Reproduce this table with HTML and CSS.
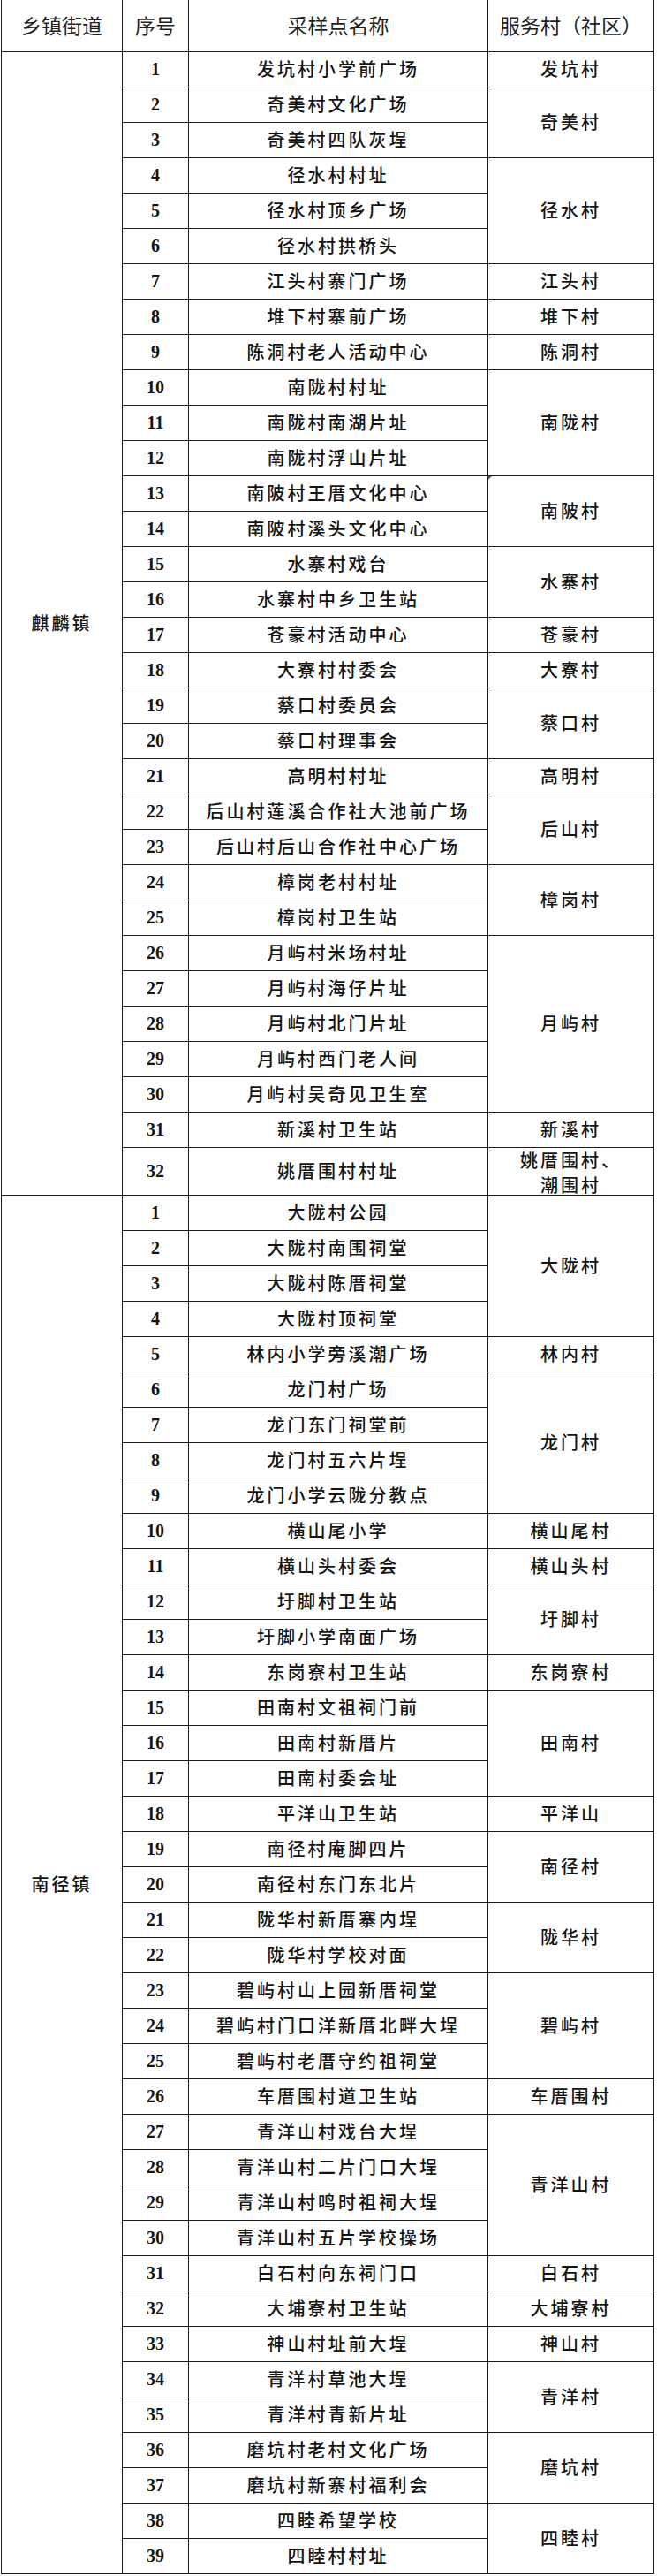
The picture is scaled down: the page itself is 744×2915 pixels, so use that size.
FILE: index.html
```html
<!DOCTYPE html>
<html lang="zh-CN">
<head>
<meta charset="utf-8">
<title>核酸采样点</title>
<link rel="stylesheet" href="styles.css">
</head>
<body>
<table class="sites">
<colgroup>
<col class="c-town"><col class="c-no"><col class="c-name"><col class="c-vil">
</colgroup>
<thead>
<tr class="head">
<th>乡镇街道</th><th>序号</th><th>采样点名称</th><th>服务村（社区）</th>
</tr>
</thead>
<tbody>
<tr><td class="town" rowspan="32">麒麟镇</td><td class="no">1</td><td class="nm">发坑村小学前广场</td><td class="vl">发坑村</td></tr>
<tr><td class="no">2</td><td class="nm">奇美村文化广场</td><td class="vl" rowspan="2">奇美村</td></tr>
<tr><td class="no">3</td><td class="nm">奇美村四队灰埕</td></tr>
<tr><td class="no">4</td><td class="nm">径水村村址</td><td class="vl" rowspan="3">径水村</td></tr>
<tr><td class="no">5</td><td class="nm">径水村顶乡广场</td></tr>
<tr><td class="no">6</td><td class="nm">径水村拱桥头</td></tr>
<tr><td class="no">7</td><td class="nm">江头村寨门广场</td><td class="vl">江头村</td></tr>
<tr><td class="no">8</td><td class="nm">堆下村寨前广场</td><td class="vl">堆下村</td></tr>
<tr><td class="no">9</td><td class="nm">陈洞村老人活动中心</td><td class="vl">陈洞村</td></tr>
<tr><td class="no">10</td><td class="nm">南陇村村址</td><td class="vl" rowspan="3">南陇村</td></tr>
<tr><td class="no">11</td><td class="nm">南陇村南湖片址</td></tr>
<tr><td class="no">12</td><td class="nm">南陇村浮山片址</td></tr>
<tr><td class="no">13</td><td class="nm">南陂村王厝文化中心</td><td class="vl mark" rowspan="2"><span class="flag"></span>南陂村</td></tr>
<tr><td class="no">14</td><td class="nm">南陂村溪头文化中心</td></tr>
<tr><td class="no">15</td><td class="nm">水寨村戏台</td><td class="vl" rowspan="2">水寨村</td></tr>
<tr><td class="no">16</td><td class="nm">水寨村中乡卫生站</td></tr>
<tr><td class="no">17</td><td class="nm">苍豪村活动中心</td><td class="vl">苍豪村</td></tr>
<tr><td class="no">18</td><td class="nm">大寮村村委会</td><td class="vl">大寮村</td></tr>
<tr><td class="no">19</td><td class="nm">蔡口村委员会</td><td class="vl" rowspan="2">蔡口村</td></tr>
<tr><td class="no">20</td><td class="nm">蔡口村理事会</td></tr>
<tr><td class="no">21</td><td class="nm">高明村村址</td><td class="vl">高明村</td></tr>
<tr><td class="no">22</td><td class="nm">后山村莲溪合作社大池前广场</td><td class="vl" rowspan="2">后山村</td></tr>
<tr><td class="no">23</td><td class="nm">后山村后山合作社中心广场</td></tr>
<tr><td class="no">24</td><td class="nm">樟岗老村村址</td><td class="vl" rowspan="2">樟岗村</td></tr>
<tr><td class="no">25</td><td class="nm">樟岗村卫生站</td></tr>
<tr><td class="no">26</td><td class="nm">月屿村米场村址</td><td class="vl" rowspan="5">月屿村</td></tr>
<tr><td class="no">27</td><td class="nm">月屿村海仔片址</td></tr>
<tr><td class="no">28</td><td class="nm">月屿村北门片址</td></tr>
<tr><td class="no">29</td><td class="nm">月屿村西门老人间</td></tr>
<tr><td class="no">30</td><td class="nm">月屿村吴奇见卫生室</td></tr>
<tr><td class="no">31</td><td class="nm">新溪村卫生站</td><td class="vl">新溪村</td></tr>
<tr class="tall"><td class="no">32</td><td class="nm">姚厝围村村址</td><td class="vl two"><span class="lines">姚厝围村、<br>潮围村</span></td></tr>

<tr><td class="town" rowspan="39">南径镇</td><td class="no">1</td><td class="nm">大陇村公园</td><td class="vl" rowspan="4">大陇村</td></tr>
<tr><td class="no">2</td><td class="nm">大陇村南围祠堂</td></tr>
<tr><td class="no">3</td><td class="nm">大陇村陈厝祠堂</td></tr>
<tr><td class="no">4</td><td class="nm">大陇村顶祠堂</td></tr>
<tr><td class="no">5</td><td class="nm">林内小学旁溪潮广场</td><td class="vl">林内村</td></tr>
<tr><td class="no">6</td><td class="nm">龙门村广场</td><td class="vl" rowspan="4">龙门村</td></tr>
<tr><td class="no">7</td><td class="nm">龙门东门祠堂前</td></tr>
<tr><td class="no">8</td><td class="nm">龙门村五六片埕</td></tr>
<tr><td class="no">9</td><td class="nm">龙门小学云陇分教点</td></tr>
<tr><td class="no">10</td><td class="nm">横山尾小学</td><td class="vl">横山尾村</td></tr>
<tr><td class="no">11</td><td class="nm">横山头村委会</td><td class="vl">横山头村</td></tr>
<tr><td class="no">12</td><td class="nm">圩脚村卫生站</td><td class="vl" rowspan="2">圩脚村</td></tr>
<tr><td class="no">13</td><td class="nm">圩脚小学南面广场</td></tr>
<tr><td class="no">14</td><td class="nm">东岗寮村卫生站</td><td class="vl">东岗寮村</td></tr>
<tr><td class="no">15</td><td class="nm">田南村文祖祠门前</td><td class="vl" rowspan="3">田南村</td></tr>
<tr><td class="no">16</td><td class="nm">田南村新厝片</td></tr>
<tr><td class="no">17</td><td class="nm">田南村委会址</td></tr>
<tr><td class="no">18</td><td class="nm">平洋山卫生站</td><td class="vl">平洋山</td></tr>
<tr><td class="no">19</td><td class="nm">南径村庵脚四片</td><td class="vl" rowspan="2">南径村</td></tr>
<tr><td class="no">20</td><td class="nm">南径村东门东北片</td></tr>
<tr><td class="no">21</td><td class="nm">陇华村新厝寨内埕</td><td class="vl" rowspan="2">陇华村</td></tr>
<tr><td class="no">22</td><td class="nm">陇华村学校对面</td></tr>
<tr><td class="no">23</td><td class="nm">碧屿村山上园新厝祠堂</td><td class="vl" rowspan="3">碧屿村</td></tr>
<tr><td class="no">24</td><td class="nm">碧屿村门口洋新厝北畔大埕</td></tr>
<tr><td class="no">25</td><td class="nm">碧屿村老厝守约祖祠堂</td></tr>
<tr><td class="no">26</td><td class="nm">车厝围村道卫生站</td><td class="vl">车厝围村</td></tr>
<tr><td class="no">27</td><td class="nm">青洋山村戏台大埕</td><td class="vl" rowspan="4">青洋山村</td></tr>
<tr><td class="no">28</td><td class="nm">青洋山村二片门口大埕</td></tr>
<tr><td class="no">29</td><td class="nm">青洋山村鸣时祖祠大埕</td></tr>
<tr><td class="no">30</td><td class="nm">青洋山村五片学校操场</td></tr>
<tr><td class="no">31</td><td class="nm">白石村向东祠门口</td><td class="vl">白石村</td></tr>
<tr><td class="no">32</td><td class="nm">大埔寮村卫生站</td><td class="vl">大埔寮村</td></tr>
<tr><td class="no">33</td><td class="nm">神山村址前大埕</td><td class="vl">神山村</td></tr>
<tr><td class="no">34</td><td class="nm">青洋村草池大埕</td><td class="vl" rowspan="2">青洋村</td></tr>
<tr><td class="no">35</td><td class="nm">青洋村青新片址</td></tr>
<tr><td class="no">36</td><td class="nm">磨坑村老村文化广场</td><td class="vl" rowspan="2">磨坑村</td></tr>
<tr><td class="no">37</td><td class="nm">磨坑村新寨村福利会</td></tr>
<tr><td class="no">38</td><td class="nm">四睦希望学校</td><td class="vl" rowspan="2">四睦村</td></tr>
<tr><td class="no">39</td><td class="nm">四睦村村址</td></tr>
</tbody>
</table>
</body>
</html>
```

FILE: styles.css
```css
html, body {
  margin: 0;
  padding: 0;
  background: #ffffff;
}

.sites {
  margin: 0 0 0 1px;
  width: 739px;
  table-layout: fixed;
  border-collapse: collapse;
  color: #141414;
}

.c-town { width: 137px; }
.c-no { width: 75px; }
.c-name { width: 339px; }
.c-vil { width: 188px; }

.sites th,
.sites td {
  border: 1px solid #1c1c1c;
  padding: 0;
  text-align: center;
  vertical-align: middle;
  white-space: nowrap;
}

.head {
  height: 58px;
}

.head th {
  border-top: none;
  font-family: "Noto Sans CJK SC", "Noto Sans", sans-serif;
  font-size: 23px;
  font-weight: 400;
  color: #1e1e1e;
  line-height: 1;
}

.sites tbody tr {
  height: 40px;
}

.sites tbody tr.tall {
  height: 54px;
}

.town,
.nm,
.vl {
  font-family: "Noto Sans CJK SC", "Noto Sans", sans-serif;
  font-size: 20px;
  font-weight: 500;
  letter-spacing: 3px;
  padding-left: 3px;
  line-height: 1;
  padding-top: 3px;
}

.vl.two {
  padding-top: 4px;
}

.lines {
  display: block;
  line-height: 28px;
  margin: -4px 0 -4px;
}

.no {
  font-family: "Liberation Serif", "Times New Roman", serif;
  font-size: 20px;
  font-weight: 700;
  line-height: 1;
  padding-top: 3px;
}

.mark {
  position: relative;
}

.flag {
  position: absolute;
  left: 0;
  top: 0;
  width: 0;
  height: 0;
  border-top: 4px solid #2f7d32;
  border-right: 4px solid transparent;
}
```
